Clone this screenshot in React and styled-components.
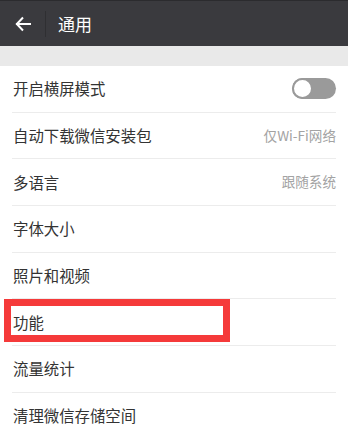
import React from 'react';
import styled, { createGlobalStyle } from 'styled-components';

const GlobalStyle = createGlobalStyle`
  html, body {
    margin: 0;
    padding: 0;
    background: #ffffff;
    font-family: "Noto Sans CJK SC", "Noto Sans", sans-serif;
  }
`;

const Page = styled.div`
  width: 348px;
  height: 439px;
  overflow: hidden;
  background: #ffffff;
`;

const Header = styled.div`
  height: 46px;
  display: flex;
  align-items: center;
  background: #3a3a3e;
  border-top: 1px solid #2b2b2e;
  box-sizing: border-box;
`;

const Back = styled.div`
  width: 45px;
  height: 100%;
  display: flex;
  align-items: center;
  justify-content: center;
  padding-left: 1px;
  box-sizing: border-box;
`;

const Divider = styled.div`
  width: 1px;
  height: 26px;
  background: #2f2f32;
`;

const Title = styled.div`
  margin-left: 12px;
  color: #ffffff;
  font-size: 17px;
  line-height: 1;
`;

const Gap = styled.div`
  height: 20px;
  background: #e9e9e9;
`;

const List = styled.div`
  padding: 0 12px;
`;

const Row = styled.div`
  height: 46.7px;
  display: flex;
  align-items: center;
  justify-content: space-between;
  padding-left: 1px;
  border-bottom: ${p => (p.$last ? 'none' : '1px solid #ececec')};
  box-sizing: border-box;
  position: relative;
`;

const Label = styled.span`
  color: #333333;
  font-size: 15.4px;
  line-height: 1;
`;

const Value = styled.span`
  color: #a3a3a3;
  font-size: 13.6px;
  line-height: 1;
`;

const Toggle = styled.div`
  width: 44px;
  height: 21px;
  border-radius: 11px;
  background: #9a9a9a;
  position: relative;
`;

const Knob = styled.div`
  position: absolute;
  left: 0;
  top: 0;
  width: 21px;
  height: 21px;
  border-radius: 50%;
  background: #ffffff;
  border: 2px solid #9a9a9a;
  box-sizing: border-box;
`;

const Highlight = styled.div`
  position: absolute;
  left: -8px;
  top: 0;
  width: 226px;
  height: 43px;
  border: 7px solid #f53a3a;
  box-sizing: border-box;
`;

const rows = [
  { label: '开启横屏模式', toggle: true },
  { label: '自动下载微信安装包', value: '仅Wi-Fi网络' },
  { label: '多语言', value: '跟随系统' },
  { label: '字体大小' },
  { label: '照片和视频' },
  { label: '功能', marked: true },
  { label: '流量统计' },
  { label: '清理微信存储空间', last: true },
];

export default function App() {
  return (
    <Page>
      <GlobalStyle />
      <Header>
        <Back>
          <svg width="16" height="16" viewBox="0 0 16 16" fill="none" stroke="#ffffff" strokeWidth="2" strokeLinecap="square">
            <path d="M2 8h13" />
            <path d="M8 1.5L1.8 8l6.2 6.5" strokeLinecap="butt" />
          </svg>
        </Back>
        <Divider />
        <Title>通用</Title>
      </Header>
      <Gap />
      <List>
        {rows.map(r => (
          <Row key={r.label} $last={r.last}>
            <Label>{r.label}</Label>
            {r.value && <Value>{r.value}</Value>}
            {r.toggle && (
              <Toggle>
                <Knob />
              </Toggle>
            )}
            {r.marked && <Highlight />}
          </Row>
        ))}
      </List>
    </Page>
  );
}
